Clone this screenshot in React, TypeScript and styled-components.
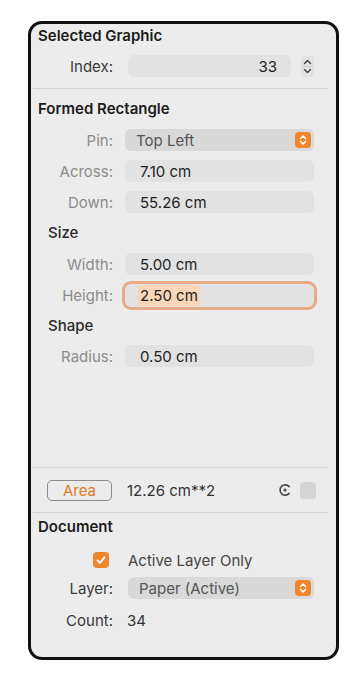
import styled, { createGlobalStyle } from 'styled-components';

const GlobalStyle = createGlobalStyle`
  html, body {
    margin: 0;
    padding: 0;
    background: #ffffff;
  }
  body {
    font-family: Inter, 'Noto Sans', 'Liberation Sans', sans-serif;
    -webkit-font-smoothing: antialiased;
  }
`;

const Page = styled.div`
  box-sizing: border-box;
  width: 360px;
  height: 700px;
  padding: 21px 0 0 28px;
`;

const Panel = styled.div`
  box-sizing: border-box;
  width: 311px;
  height: 639px;
  border: 3px solid #111111;
  border-radius: 14px;
  background: #ececec;
  display: flex;
  flex-direction: column;
  overflow: hidden;
`;

const SectionTitle = styled.div<{ $indent?: boolean; $gap?: number }>`
  height: 22px;
  line-height: 22px;
  margin-top: ${(p) => p.$gap ?? 0}px;
  padding-left: ${(p) => (p.$indent ? 17 : 7)}px;
  font-size: 15px;
  font-weight: ${(p) => (p.$indent ? 500 : 600)};
  color: ${(p) => (p.$indent ? '#2b2b2b' : '#1c1c1c')};
`;

const Row = styled.div<{ $gap?: number }>`
  display: flex;
  align-items: center;
  height: 22px;
  margin-top: ${(p) => p.$gap ?? 9}px;
  padding-right: 22px;
`;

const Label = styled.div<{ $dim?: boolean }>`
  flex: 0 0 82px;
  text-align: right;
  font-size: 15px;
  color: ${(p) => (p.$dim ? '#8b8b8b' : '#3a3a3a')};
  margin-right: 12px;
`;

const Field = styled.div<{ $focused?: boolean; $right?: boolean; $shift?: number }>`
  box-sizing: border-box;
  flex: 1;
  height: ${(p) => (p.$focused ? 23 : 22)}px;
  margin-left: ${(p) => p.$shift ?? 0}px;
  border-radius: 6px;
  background: #e2e2e2;
  display: flex;
  align-items: center;
  justify-content: ${(p) => (p.$right ? 'flex-end' : 'flex-start')};
  padding: ${(p) => (p.$right ? '0 14px 0 0' : p.$focused ? '0 0 0 13px' : '0 0 0 15px')};
  font-size: 15px;
  color: #1e1e1e;
  box-shadow: ${(p) => (p.$focused ? '0 0 0 3px #e6ab84' : 'none')};
`;

const Selection = styled.span`
  background: #f9d6b7;
  padding: 1px 2px;
`;

const Popup = styled.div<{ $shift?: number }>`
  box-sizing: border-box;
  flex: 1;
  height: 22px;
  margin-left: ${(p) => p.$shift ?? 0}px;
  border-radius: 6px;
  background: #d9d9d9;
  display: flex;
  align-items: center;
  justify-content: space-between;
  padding: 0 3px 0 11px;
  font-size: 15px;
  color: #555555;
`;

const PopupButton = styled.div`
  width: 16px;
  height: 16px;
  border-radius: 4px;
  background: #f0862c;
  display: flex;
  align-items: center;
  justify-content: center;
`;

const Stepper = styled.div`
  flex: 0 0 13px;
  height: 21px;
  margin-left: 10px;
  border-radius: 4px;
  background: #e2e2e2;
  display: flex;
  align-items: center;
  justify-content: center;
`;

const Divider = styled.div<{ $gap?: number; $auto?: boolean }>`
  height: 1px;
  margin: ${(p) => (p.$auto ? 'auto' : `${p.$gap ?? 11}px`)} 8px 0 2px;
  background: #d5d5d5;
  flex-shrink: 0;
`;

const AreaRow = styled.div`
  display: flex;
  align-items: center;
  height: 22px;
  margin-top: 11px;
  padding: 0 20px 0 16px;
`;

const AreaButton = styled.div`
  box-sizing: border-box;
  width: 65px;
  height: 21px;
  border: 1.5px solid #8d8d8d;
  border-radius: 5px;
  display: flex;
  align-items: center;
  justify-content: center;
  font-size: 15px;
  color: #e07a26;
  margin-right: 15px;
`;

const Value = styled.div`
  flex: 1;
  font-size: 15px;
  color: #333333;
`;

const Swatch = styled.div`
  width: 16px;
  height: 17px;
  border-radius: 3px;
  background: #d5d5d5;
  margin-left: 8px;
`;

const CheckCell = styled.div`
  flex: 0 0 82px;
  display: flex;
  justify-content: flex-end;
  padding-right: 4px;
  box-sizing: border-box;
  margin-right: 15px;
`;

const Checkbox = styled.div`
  width: 16px;
  height: 16px;
  border-radius: 4px;
  background: #f0862c;
  display: flex;
  align-items: center;
  justify-content: center;
`;

const CheckText = styled.div`
  font-size: 15px;
  color: #444444;
`;

const PlainValue = styled.div`
  margin-left: 2px;
  font-size: 15px;
  color: #333333;
`;

const UpDown = ({ color, w = 8 }: { color: string; w?: number }) => (
  <svg width={w} height="12" viewBox="0 0 8 12" fill="none">
    <path d="M1.5 4.5 L4 2 L6.5 4.5" stroke={color} strokeWidth="1.5" strokeLinecap="round" strokeLinejoin="round" />
    <path d="M1.5 7.5 L4 10 L6.5 7.5" stroke={color} strokeWidth="1.5" strokeLinecap="round" strokeLinejoin="round" />
  </svg>
);

const PopupArrows = () => (
  <PopupButton>
    <UpDown color="#ffffff" />
  </PopupButton>
);

const StepperArrows = () => (
  <Stepper>
    <svg width="11" height="19" viewBox="0 0 11 19" fill="none">
      <path d="M2.5 6.5 L5.5 3.5 L8.5 6.5" stroke="#4a4a4a" strokeWidth="1.5" strokeLinecap="round" strokeLinejoin="round" />
      <line x1="1" y1="9.5" x2="10" y2="9.5" stroke="#cfcfcf" strokeWidth="1" />
      <path d="M2.5 12.5 L5.5 15.5 L8.5 12.5" stroke="#4a4a4a" strokeWidth="1.5" strokeLinecap="round" strokeLinejoin="round" />
    </svg>
  </Stepper>
);

const TargetIcon = () => (
  <svg width="14" height="14" viewBox="0 0 14 14" fill="none">
    <path d="M11.2 3.6 A5.2 5.2 0 1 0 11.2 10.4" stroke="#4d4d4d" strokeWidth="1.7" strokeLinecap="round" />
    <circle cx="7" cy="7" r="1.6" fill="#4d4d4d" />
  </svg>
);

const CheckMark = () => (
  <svg width="12" height="12" viewBox="0 0 12 12" fill="none">
    <path d="M2.5 6.3 L5 8.8 L9.6 3.2" stroke="#ffffff" strokeWidth="1.9" strokeLinecap="round" strokeLinejoin="round" />
  </svg>
);

export default function App() {
  return (
    <>
      <GlobalStyle />
      <Page>
        <Panel>
          <SectionTitle $gap={1}>Selected Graphic</SectionTitle>
          <Row $gap={8}>
            <Label>Index:</Label>
            <Field $right $shift={3}>33</Field>
            <StepperArrows />
          </Row>
          <Divider />

          <SectionTitle $gap={9}>Formed Rectangle</SectionTitle>
          <Row>
            <Label $dim>Pin:</Label>
            <Popup>
              Top Left
              <PopupArrows />
            </Popup>
          </Row>
          <Row>
            <Label $dim>Across:</Label>
            <Field>7.10 cm</Field>
          </Row>
          <Row>
            <Label $dim>Down:</Label>
            <Field>55.26 cm</Field>
          </Row>

          <SectionTitle $indent $gap={9}>Size</SectionTitle>
          <Row>
            <Label $dim>Width:</Label>
            <Field>5.00 cm</Field>
          </Row>
          <Row>
            <Label $dim>Height:</Label>
            <Field $focused>
              <Selection>2.50 cm</Selection>
            </Field>
          </Row>

          <SectionTitle $indent $gap={9}>Shape</SectionTitle>
          <Row $gap={8}>
            <Label $dim>Radius:</Label>
            <Field>0.50 cm</Field>
          </Row>

          <Divider $auto />
          <AreaRow>
            <AreaButton>Area</AreaButton>
            <Value>12.26 cm**2</Value>
            <TargetIcon />
            <Swatch />
          </AreaRow>
          <Divider />

          <SectionTitle $gap={3}>Document</SectionTitle>
          <Row $gap={11}>
            <CheckCell>
              <Checkbox>
                <CheckMark />
              </Checkbox>
            </CheckCell>
            <CheckText>Active Layer Only</CheckText>
          </Row>
          <Row $gap={6}>
            <Label>Layer:</Label>
            <Popup $shift={3}>
              Paper (Active)
              <PopupArrows />
            </Popup>
          </Row>
          <Row $gap={10}>
            <Label>Count:</Label>
            <PlainValue>34</PlainValue>
          </Row>
          <div style={{ height: 26, flexShrink: 0 }} />
        </Panel>
      </Page>
    </>
  );
}
